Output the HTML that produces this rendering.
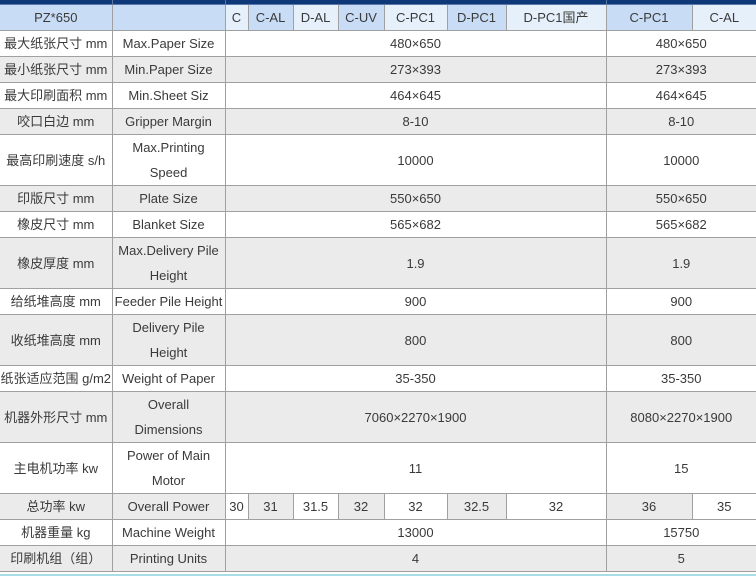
<!DOCTYPE html>
<html><head><meta charset="utf-8"><style>
body{margin:0;width:756px;height:579px;overflow:hidden;background:#fff;font-family:"Liberation Sans","Noto Sans CJK SC",sans-serif;font-size:13px;color:#3a3a3a}
table{border-collapse:collapse;table-layout:fixed;width:756px;position:absolute;left:0;top:0}
td{border:1px solid #a0a0a0;text-align:center;padding:0;line-height:25px;white-space:nowrap;overflow:hidden}
td:first-child{border-left:none}
td:last-child{border-right:none}
tr.top td{height:4px;background:#0e3878;border-top:none;border-color:#5a78a8;line-height:4px;font-size:0}
tr.h td{height:25px;background:#c8ddf5}
tr.h td.l{background:#e6f0fb}
tr.s td{height:25px}
tr.d td{height:50px}
tr.g td{background:#ebebeb}
tr.w td{background:#fff}
td.w{background:#fff!important}
td.g{background:#ebebeb!important}
.bot{position:absolute;left:0;top:574px;width:756px;height:2px;background:#a8dde6}
</style></head><body>
<table>
<colgroup><col style="width:112px"><col style="width:113px"><col style="width:23px"><col style="width:45px"><col style="width:45px"><col style="width:46px"><col style="width:63px"><col style="width:59px"><col style="width:100px"><col style="width:86px"><col style="width:64px"></colgroup>
<tr class="top"><td></td><td></td><td colspan="7"></td><td colspan="2"></td></tr>
<tr class="h"><td>PZ*650</td><td></td><td class="l">C</td><td>C-AL</td><td class="l">D-AL</td><td>C-UV</td><td class="l">C-PC1</td><td>D-PC1</td><td class="l">D-PC1国产</td><td>C-PC1</td><td class="l">C-AL</td></tr>
<tr class="s w"><td>最大纸张尺寸 mm</td><td>Max.Paper Size</td><td colspan="7">480×650</td><td colspan="2">480×650</td></tr>
<tr class="s g"><td>最小纸张尺寸 mm</td><td>Min.Paper Size</td><td colspan="7">273×393</td><td colspan="2">273×393</td></tr>
<tr class="s w"><td>最大印刷面积 mm</td><td>Min.Sheet Siz</td><td colspan="7">464×645</td><td colspan="2">464×645</td></tr>
<tr class="s g"><td>咬口白边 mm</td><td>Gripper Margin</td><td colspan="7">8-10</td><td colspan="2">8-10</td></tr>
<tr class="d w"><td>最高印刷速度 s/h</td><td>Max.Printing<br>Speed</td><td colspan="7">10000</td><td colspan="2">10000</td></tr>
<tr class="s g"><td>印版尺寸 mm</td><td>Plate Size</td><td colspan="7">550×650</td><td colspan="2">550×650</td></tr>
<tr class="s w"><td>橡皮尺寸 mm</td><td>Blanket Size</td><td colspan="7">565×682</td><td colspan="2">565×682</td></tr>
<tr class="d g"><td>橡皮厚度 mm</td><td>Max.Delivery Pile<br>Height</td><td colspan="7">1.9</td><td colspan="2">1.9</td></tr>
<tr class="s w"><td>给纸堆高度 mm</td><td>Feeder Pile Height</td><td colspan="7">900</td><td colspan="2">900</td></tr>
<tr class="d g"><td>收纸堆高度 mm</td><td>Delivery Pile<br>Height</td><td colspan="7">800</td><td colspan="2">800</td></tr>
<tr class="s w"><td>纸张适应范围 g/m2</td><td>Weight of Paper</td><td colspan="7">35-350</td><td colspan="2">35-350</td></tr>
<tr class="d g"><td>机器外形尺寸 mm</td><td>Overall<br>Dimensions</td><td colspan="7">7060×2270×1900</td><td colspan="2">8080×2270×1900</td></tr>
<tr class="d w"><td>主电机功率 kw</td><td>Power of Main<br>Motor</td><td colspan="7">11</td><td colspan="2">15</td></tr>
<tr class="s g"><td>总功率 kw</td><td>Overall Power</td><td class="w">30</td><td>31</td><td class="w">31.5</td><td>32</td><td class="w">32</td><td>32.5</td><td class="w">32</td><td>36</td><td class="w">35</td></tr>
<tr class="s w"><td>机器重量 kg</td><td>Machine Weight</td><td colspan="7">13000</td><td colspan="2">15750</td></tr>
<tr class="s g"><td>印刷机组（组）</td><td>Printing Units</td><td colspan="7">4</td><td colspan="2">5</td></tr>
</table>
<div class="bot"></div>
</body></html>
